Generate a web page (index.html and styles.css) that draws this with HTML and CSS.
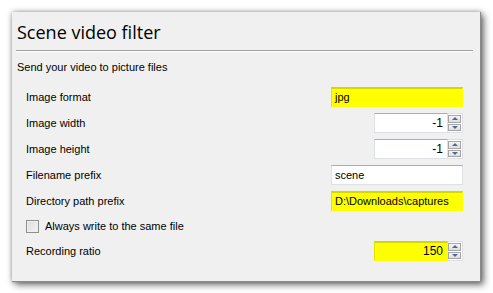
FILE: index.html
```
<!DOCTYPE html>
<html>
<head>
<meta charset="utf-8">
<link rel="stylesheet" href="styles.css">
</head>
<body>
<div class="panel">
  <div class="title">Scene video filter</div>
  <div class="sep"></div>
  <div class="subtitle">Send your video to picture files</div>
  <div class="form">
    <div class="row">
      <span class="label">Image format</span>
      <div class="field field-hl">jpg</div>
    </div>
    <div class="row">
      <span class="label">Image width</span>
      <div class="spin">
        <div class="spin-value">-1</div>
        <div class="spin-btns"><div class="btn"><span class="up"></span></div><div class="btn"><span class="down"></span></div></div>
      </div>
    </div>
    <div class="row">
      <span class="label">Image height</span>
      <div class="spin">
        <div class="spin-value">-1</div>
        <div class="spin-btns"><div class="btn"><span class="up"></span></div><div class="btn"><span class="down"></span></div></div>
      </div>
    </div>
    <div class="row">
      <span class="label">Filename prefix</span>
      <div class="field">scene</div>
    </div>
    <div class="row">
      <span class="label">Directory path prefix</span>
      <div class="field field-hl">D:\Downloads\captures</div>
    </div>
    <div class="row row-check">
      <label class="check"><span class="box"></span><span>Always write to the same file</span></label>
    </div>
    <div class="row">
      <span class="label">Recording ratio</span>
      <div class="spin">
        <div class="spin-value spin-hl">150</div>
        <div class="spin-btns"><div class="btn"><span class="up"></span></div><div class="btn"><span class="down"></span></div></div>
      </div>
    </div>
  </div>
</div>
</body>
</html>
```
FILE: styles.css
```
html, body {
  margin: 0;
  padding: 0;
  background: #ffffff;
}
body {
  font-family: "Liberation Sans", Arial, sans-serif;
  font-size: 11px;
  color: #000;
}
.panel {
  margin: 12px;
  width: 469px;
  height: 270px;
  box-sizing: border-box;
  background: #f0f0f0;
  border-right: 1px solid #8a8a8a;
  border-bottom: 1px solid #8a8a8a;
  box-shadow: 0 0 5px rgba(0,0,0,0.35), 3px 3px 7px rgba(0,0,0,0.5);
  display: flex;
  flex-direction: column;
}
.title {
  font-family: "Open Sans", "Noto Sans", sans-serif;
  font-size: 18px;
  line-height: 24px;
  margin-top: 8px;
  padding-left: 5px;
  color: #000;
}
.sep {
  margin: 6px 7px 0 4px;
  height: 0;
  border-top: 1px solid #a0a0a0;
  border-bottom: 1px solid #ffffff;
}
.subtitle {
  line-height: 16px;
  margin-top: 7px;
  padding-left: 5px;
}
.form {
  margin-top: 9px;
  padding: 0 17px 0 14px;
  display: flex;
  flex-direction: column;
}
.row {
  height: 26px;
  display: flex;
  align-items: center;
  justify-content: space-between;
}
.row-check {
  height: 24px;
}
.field {
  width: 132px;
  height: 20px;
  box-sizing: border-box;
  background: #fff;
  border: 1px solid #dde1e6;
  border-top-color: #abadb3;
  padding: 0 3px;
  line-height: 18px;
  font-size: 11px;
}
.field-hl {
  background: #ffff00;
  border-color: #d6d600 #ffff00 #ffff00 #e2e200;
  border-top-width: 2px;
  line-height: 17px;
}
.spin {
  width: 89px;
  height: 20px;
  display: flex;
}
.spin-value {
  flex: 1;
  box-sizing: border-box;
  background: #fff;
  border: 1px solid #dde1e6;
  border-top-color: #abadb3;
  text-align: right;
  padding-right: 4px;
  line-height: 18px;
  font-size: 12px;
}
.spin-hl {
  background: #ffff00;
  border-color: #d6d600 #ffff00 #ffff00 #e2e200;
  border-top-width: 2px;
  line-height: 17px;
}
.spin-btns {
  width: 15px;
  box-sizing: border-box;
  display: flex;
  flex-direction: column;
  gap: 1px;
  padding: 1px 1px 1px 0;
  background: #fff;
  border: 1px solid #dde1e6;
  border-left: none;
}
.btn {
  flex: 1;
  border: 1px solid #a6a6a6;
  background: linear-gradient(#f5f5f5, #dedede);
  display: flex;
  align-items: center;
  justify-content: center;
}
.up, .down {
  width: 0;
  height: 0;
  border-left: 3px solid transparent;
  border-right: 3px solid transparent;
}
.up {
  border-bottom: 3px solid #4a6a9c;
}
.down {
  border-top: 3px solid #4a6a9c;
}
.check {
  display: flex;
  align-items: center;
  gap: 6px;
}
.box {
  width: 13px;
  height: 13px;
  box-sizing: border-box;
  border: 1px solid #8e8f8f;
  background: linear-gradient(135deg, #dcdcdc, #f4f4f4);
  box-shadow: inset 0 0 0 1px #f0f0f0;
}
```
